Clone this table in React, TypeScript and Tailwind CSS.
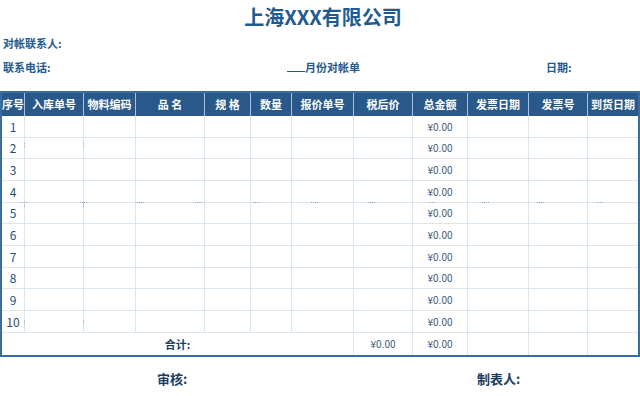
import React from "react";

const cols = ["序号", "入库单号", "物料编码", "品 名", "规 格", "数量", "报价单号", "税后价", "总金额", "发票日期", "发票号", "到货日期"];
const rowH = ["h-[22px]", "h-[21px]", "h-[22px]", "h-[22px]", "h-[21px]", "h-[22px]", "h-[22px]", "h-[21px]", "h-[22px]", "h-[22px]"];
const font = { fontFamily: '"Noto Sans CJK SC", "Noto Sans", sans-serif' };

export default function App() {
  return (
    <div className="w-[640px] h-[396px] bg-white overflow-hidden" style={font}>
      <div className="h-[33px] flex items-center justify-center pl-[6px] text-[20px] font-bold text-[#1f5a90] leading-none">
        上海XXX有限公司
      </div>
      <div className="h-[21px] flex items-center pl-[3px] text-[11px] font-bold text-[#245a8f] leading-none">
        对帐联系人:
      </div>
      <div className="h-[26px] flex items-center text-[11px] font-bold text-[#245a8f] leading-none">
        <span className="w-[287px] pl-[3px]">联系电话:</span>
        <span className="w-[259px] flex items-end">
          <span className="inline-block w-[18px] border-b border-[#245a8f] mb-[1px]"></span>
          <span>月份对帐单</span>
        </span>
        <span>日期:</span>
      </div>
      <div className="h-[11px]"></div>
      <div className="relative w-[640px] border-2 border-[#3a6d9f]">
        <div className="grid grid-cols-[23px_59px_52px_69px_46px_41px_62px_59px_55px_61px_59px_50px]">
          {cols.map((c, i) => (
            <div
              key={c}
              className={`h-[23px] bg-[#28598a] flex items-center justify-center text-[11px] font-bold text-white leading-none whitespace-pre ${i < 11 ? "border-r border-[#a9c2da]" : ""}`}
            >
              {c}
            </div>
          ))}
          {rowH.map((h, r) =>
            cols.map((c, i) => (
              <div
                key={`${r}-${i}`}
                className={`${h} border-b border-[#dbe5ee] flex items-center justify-center leading-none ${i < 11 ? "border-r" : ""}`}
              >
                {i === 0 ? (
                  <span className="text-[12px] text-[#2b4d70]">{r + 1}</span>
                ) : i === 8 ? (
                  <span className="text-[10px] text-[#3b5a7b]">¥0.00</span>
                ) : null}
              </div>
            ))
          )}
          <div className="col-span-7 h-[22px] border-r border-[#dbe5ee] flex items-center justify-center text-[11px] font-bold text-[#1f3f60] leading-none">
            合计:
          </div>
          <div className="h-[22px] border-r border-[#dbe5ee] flex items-center justify-center text-[10px] text-[#3b5a7b] leading-none">
            ¥0.00
          </div>
          <div className="h-[22px] border-r border-[#dbe5ee] flex items-center justify-center text-[10px] text-[#3b5a7b] leading-none">
            ¥0.00
          </div>
          <div className="h-[22px] border-r border-[#dbe5ee]"></div>
          <div className="h-[22px] border-r border-[#dbe5ee]"></div>
          <div className="h-[22px]"></div>
        </div>
        {[18, 78, 135, 193, 251, 309, 366, 426, 480, 535, 594].map((x) => (
          <span
            key={x}
            className="absolute top-[109px] w-[7px] border-t border-dotted border-[#8fa9c4]"
            style={{ left: x }}
          ></span>
        ))}
        {[
          [22, 50],
          [81, 50],
          [22, 227],
          [81, 227],
          [22, 109],
          [81, 109],
        ].map(([x, y]) => (
          <span
            key={`${x}-${y}`}
            className="absolute h-[5px] border-l border-dotted border-[#9fb6cd]"
            style={{ left: x, top: y }}
          ></span>
        ))}
      </div>
      <div className="h-[43px] flex items-center text-[13px] font-bold text-[#1c3d60] leading-none">
        <span className="w-[320px] pl-[157px]">审核:</span>
        <span className="pl-[157px]">制表人:</span>
      </div>
    </div>
  );
}
